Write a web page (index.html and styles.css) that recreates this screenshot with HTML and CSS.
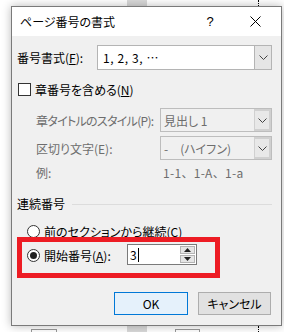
FILE: index.html
```html
<!DOCTYPE html>
<html lang="ja">
<head>
<meta charset="utf-8">
<link rel="stylesheet" href="styles.css">
</head>
<body>
<div class="page">
  <div class="deco deco-top-block"></div>
  <div class="deco deco-dots-top"></div>
  <div class="deco deco-box1"></div>
  <div class="deco deco-bottom-block"></div>
  <div class="deco deco-box2"></div>
  <div class="deco deco-dots-bottom"></div>

  <div class="dialog">
    <div class="titlebar">
      <span class="title">ページ番号の書式</span>
      <span class="spacer"></span>
      <span class="cap-help">?</span>
      <span class="cap-close">
        <svg width="11" height="11" viewBox="0 0 11 11"><path d="M0.5 0.5 L10.5 10.5 M10.5 0.5 L0.5 10.5" stroke="#000" stroke-width="1" fill="none"/></svg>
      </span>
    </div>
    <div class="body">
      <div class="row row1">
        <span class="lbl lbl-fmt">番号書式(<u>F</u>):</span>
        <div class="combo">
          <span class="combo-text fmt-val">1, 2, 3, …</span>
          <span class="combo-btn"><svg width="9" height="5" viewBox="0 0 9 5"><path d="M0.5 0.5 L4.5 4.5 L8.5 0.5" stroke="#444" fill="none"/></svg></span>
        </div>
      </div>
      <div class="row check-row">
        <span class="checkbox"></span>
        <span class="check-lbl">章番号を含める(<u>N</u>)</span>
      </div>
      <div class="row row-sub rowP">
        <span class="lbl lbl-sub lbl-p dis">章タイトルのスタイル(P):</span>
        <div class="combo combo-dis">
          <span class="combo-text">見出し 1</span>
          <span class="combo-btn"><svg width="9" height="5" viewBox="0 0 9 5"><path d="M0.5 0.5 L4.5 4.5 L8.5 0.5" stroke="#444" fill="none"/></svg></span>
        </div>
      </div>
      <div class="row row-sub rowE">
        <span class="lbl lbl-sub dis">区切り文字(E):</span>
        <div class="combo combo-dis">
          <span class="combo-text">-　(ハイフン)</span>
          <span class="combo-btn"><svg width="9" height="5" viewBox="0 0 9 5"><path d="M0.5 0.5 L4.5 4.5 L8.5 0.5" stroke="#444" fill="none"/></svg></span>
        </div>
      </div>
      <div class="row row-sub ex-row">
        <span class="lbl lbl-sub dis">例:</span>
        <span class="ex-val dis">1-1、1-A、1-a</span>
      </div>
      <div class="row group-row">
        <span class="group-lbl">連続番号</span>
        <span class="group-line"></span>
      </div>
      <div class="row radio-row r1">
        <span class="radio"></span>
        <span class="radio-lbl">前のセクションから継続(C)</span>
      </div>
      <div class="row radio-row r2">
        <span class="radio on"><span class="dot"></span></span>
        <span class="radio-lbl start-lbl">開始番号(<u>A</u>):</span>
        <div class="spin">
          <span class="spin-text">3<span class="caret"></span></span>
          <span class="spin-btns">
            <span class="spin-b"><svg width="7" height="4" viewBox="0 0 7 4"><path d="M0 4 L3.5 0 L7 4 Z" fill="#222"/></svg></span>
            <span class="spin-b"><svg width="7" height="4" viewBox="0 0 7 4"><path d="M0 0 L3.5 4 L7 0 Z" fill="#222"/></svg></span>
          </span>
        </div>
      </div>
      <div class="row btn-row">
        <span class="btn btn-ok">OK</span>
        <span class="btn btn-cancel">キャンセル</span>
      </div>
    </div>
  </div>

  <div class="highlight"></div>
</div>
</body>
</html>
```
FILE: styles.css
```css
* { box-sizing: border-box; }
html, body { margin: 0; padding: 0; background: #fff; }
body {
  font-family: "Noto Sans CJK JP", "Noto Sans", sans-serif;
  font-size: 12px;
  color: #000;
  font-feature-settings: "palt";
}
.page { position: relative; width: 284px; height: 332px; overflow: hidden; background: #fff; }

.deco { position: absolute; }
.deco-top-block { left: 127px; top: 0; width: 20px; height: 6px; background: #d9d9d9; }
.deco-dots-top { left: 258px; top: 0; height: 6px; border-left: 1px dotted #000; }
.deco-box1 { left: 31px; top: 329px; width: 26px; height: 10px; border: 1px solid #999; }
.deco-bottom-block { left: 127px; top: 326px; width: 20px; height: 6px; background: #d9d9d9; }
.deco-box2 { left: 175px; top: 329px; width: 25px; height: 10px; border: 1px solid #999; }
.deco-dots-bottom { left: 258px; top: 326px; height: 6px; border-left: 1px dotted #000; }

.dialog {
  position: absolute;
  left: 11px; top: 6px;
  width: 271px; height: 320px;
  border: 1px solid #7a7a7a;
  box-shadow: 0 0 9px rgba(0,0,0,0.28);
  display: flex; flex-direction: column;
  background: #f0f0f0;
}
.titlebar {
  height: 29px; flex: none;
  background: #fff;
  display: flex; align-items: center;
  padding-left: 8px;
}
.title { font-size: 12px; line-height: 16px; }
.spacer { flex: 1; }
.cap-help { width: 40px; text-align: center; font-family: "Liberation Sans", sans-serif; font-size: 13px; }
.cap-close { width: 51px; display: flex; justify-content: center; align-items: center; }
.cap-close svg { display: block; }

.body { flex: 1; padding: 9px 9px 0 5px; display: flex; flex-direction: column; }
.row { display: flex; align-items: center; }
.row1 { height: 25px; }
.lbl { white-space: nowrap; }
.lbl-fmt { width: 80px; flex: none; }
.combo {
  flex: 1; height: 100%;
  display: flex; align-items: stretch;
  background: #fff; border: 1px solid #b4b4b4;
}
.combo-text { flex: 1; display: flex; align-items: center; padding-left: 5px; white-space: nowrap; }
.fmt-val { letter-spacing: 0.6px; }
.combo-btn {
  width: 17px; flex: none;
  background: #e5e5e5;
  border-left: 1px solid #b4b4b4;
  display: flex; align-items: center; justify-content: center;
}
.combo-dis { background: #f0f0f0; border-color: #bdbdbd; }
.combo-dis .combo-text { color: #6d6d6d; padding-left: 3px; }
.combo-dis .combo-btn { border-left-color: #c8c8c8; background: #e8e8e8; }
.rowP .combo-btn, .rowE .combo-btn { border: 2px solid #d0d0d0; border-left-width: 1px; }

.check-row { height: 15px; margin-top: 12px; padding-left: 1px; }
.checkbox { width: 13px; height: 13px; border: 1px solid #333; background: #fff; flex: none; }
.check-lbl { margin-left: 4px; }

.row-sub { padding-left: 19px; }
.lbl-sub { width: 124px; flex: none; }
.lbl-p { letter-spacing: -0.7px; }
.dis { color: #6d6d6d; }
.rowP { height: 24px; margin-top: 11px; }
.rowE { height: 24px; margin-top: 4px; }
.ex-row { height: 16px; margin-top: 4px; }
.ex-val { padding-left: 3px; font-feature-settings: normal; letter-spacing: 0.3px; }

.group-row { height: 16px; margin-top: 15px; }
.group-lbl { color: #000; }
.group-line { flex: 1; margin-left: 7px; border-top: 1px solid #dcdcdc; margin-top: 2px; }

.radio-row { padding-left: 10px; }
.r1 { height: 16px; margin-top: 12px; }
.r2 { height: 21px; margin-top: 5px; }
.radio {
  width: 13px; height: 13px; border-radius: 50%;
  border: 1px solid #333; background: #fff; flex: none;
  display: flex; align-items: center; justify-content: center;
}
.radio.on { position: relative; top: 1px; }
.dot { width: 7px; height: 7px; border-radius: 50%; background: #222; }
.radio-lbl { margin-left: 4px; white-space: nowrap; }
.start-lbl { width: 83px; flex: none; }
.r2 .radio-lbl { position: relative; top: 1px; }

.spin {
  width: 70px; height: 21px; flex: none;
  background: #fff; border: 1px solid #7a7a7a;
  display: flex; align-items: stretch;
}
.spin-text { flex: 1; display: flex; align-items: center; padding-left: 2px; }
.caret { display: inline-block; width: 1px; height: 14px; background: #000; margin-left: 1px; }
.spin-btns { width: 16px; flex: none; display: flex; flex-direction: column; padding: 1px 1px 1px 0; gap: 1px; }
.spin-b {
  flex: 1; background: #e5e5e5; border: 1px solid #b4b4b4;
  display: flex; align-items: center; justify-content: center;
}
.spin-b svg { display: block; }

.btn-row { height: 23px; margin-top: 27px; justify-content: flex-end; gap: 10px; padding-right: 1px; }
.btn {
  height: 23px; display: flex; align-items: center; justify-content: center;
}
.btn-ok { width: 74px; background: #e5f1fb; border: 1px solid #0078d7; }
.btn-cancel { width: 73px; background: #e1e1e1; border: 1px solid #adadad; }

.highlight {
  position: absolute;
  left: 17px; top: 237px;
  width: 203px; height: 41px;
  border: 5px solid #ed1c24;
}
```
